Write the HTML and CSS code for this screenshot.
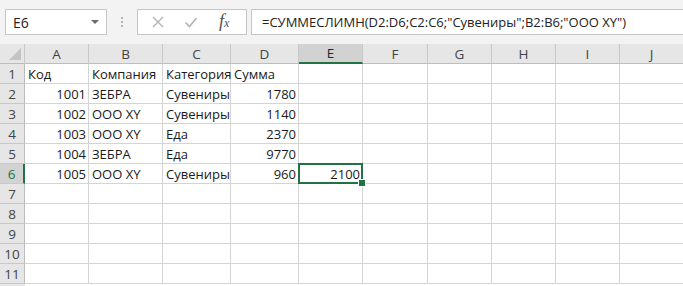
FILE: index.html
```html
<!DOCTYPE html>
<html lang="ru">
<head>
<meta charset="utf-8">
<link rel="stylesheet" href="styles.css">
</head>
<body>
<div class="toolbar">
  <div class="namebox"><span>E6</span>
    <svg class="dd" width="8" height="5" viewBox="0 0 8 5"><path d="M0 0h8L4 4z" fill="#6a6a6a"/></svg>
  </div>
  <div class="dots"><i></i><i></i><i></i></div>
  <div class="fxbox">
    <svg class="ic" width="14" height="14" viewBox="0 0 14 14"><path d="M2 2L12 12M12 2L2 12" stroke="#b3b3b3" stroke-width="1.4" fill="none"/></svg>
    <svg class="ic" width="14" height="14" viewBox="0 0 14 14"><path d="M1.5 7.5L5.5 11.5L12.5 3" stroke="#b3b3b3" stroke-width="1.6" fill="none"/></svg>
    <span class="fx">f<sub>x</sub></span>
  </div>
  <div class="formula">=СУММЕСЛИМН(D2:D6;C2:C6;"Сувениры";B2:B6;"ООО XY")</div>
</div>
<div class="sheet">
  <div class="corner"><svg width="12" height="12" viewBox="0 0 12 12"><path d="M12 0V12H0z" fill="#c3c3c3"/></svg></div>
  <div class="ch">A</div><div class="ch">B</div><div class="ch">C</div><div class="ch">D</div><div class="ch sel">E</div><div class="ch">F</div><div class="ch">G</div><div class="ch">H</div><div class="ch">I</div><div class="ch">J</div>

  <div class="rh">1</div><div class="c">Код</div><div class="c">Компания</div><div class="c">Категория</div><div class="c">Сумма</div><div class="c"></div><div class="c"></div><div class="c"></div><div class="c"></div><div class="c"></div><div class="c"></div>
  <div class="rh">2</div><div class="c n">1001</div><div class="c">ЗЕБРА</div><div class="c">Сувениры</div><div class="c n">1780</div><div class="c"></div><div class="c"></div><div class="c"></div><div class="c"></div><div class="c"></div><div class="c"></div>
  <div class="rh">3</div><div class="c n">1002</div><div class="c">ООО XY</div><div class="c">Сувениры</div><div class="c n">1140</div><div class="c"></div><div class="c"></div><div class="c"></div><div class="c"></div><div class="c"></div><div class="c"></div>
  <div class="rh">4</div><div class="c n">1003</div><div class="c">ООО XY</div><div class="c">Еда</div><div class="c n">2370</div><div class="c"></div><div class="c"></div><div class="c"></div><div class="c"></div><div class="c"></div><div class="c"></div>
  <div class="rh">5</div><div class="c n">1004</div><div class="c">ЗЕБРА</div><div class="c">Еда</div><div class="c n">9770</div><div class="c"></div><div class="c"></div><div class="c"></div><div class="c"></div><div class="c"></div><div class="c"></div>
  <div class="rh sel">6</div><div class="c n">1005</div><div class="c">ООО XY</div><div class="c">Сувениры</div><div class="c n">960</div><div class="c n active">2100</div><div class="c"></div><div class="c"></div><div class="c"></div><div class="c"></div><div class="c"></div>
  <div class="rh">7</div><div class="c"></div><div class="c"></div><div class="c"></div><div class="c"></div><div class="c"></div><div class="c"></div><div class="c"></div><div class="c"></div><div class="c"></div><div class="c"></div>
  <div class="rh">8</div><div class="c"></div><div class="c"></div><div class="c"></div><div class="c"></div><div class="c"></div><div class="c"></div><div class="c"></div><div class="c"></div><div class="c"></div><div class="c"></div>
  <div class="rh">9</div><div class="c"></div><div class="c"></div><div class="c"></div><div class="c"></div><div class="c"></div><div class="c"></div><div class="c"></div><div class="c"></div><div class="c"></div><div class="c"></div>
  <div class="rh">10</div><div class="c"></div><div class="c"></div><div class="c"></div><div class="c"></div><div class="c"></div><div class="c"></div><div class="c"></div><div class="c"></div><div class="c"></div><div class="c"></div>
  <div class="rh">11</div><div class="c"></div><div class="c"></div><div class="c"></div><div class="c"></div><div class="c"></div><div class="c"></div><div class="c"></div><div class="c"></div><div class="c"></div><div class="c"></div>
</div>
</body>
</html>
```
FILE: styles.css
```css
* { box-sizing: border-box; }
html, body { margin: 0; padding: 0; background: #fff; overflow: hidden; }
body {
  width: 683px; height: 286px;
  font-family: "Open Sans", "Liberation Sans", sans-serif;
  font-size: 13px;
  color: #1a1a1a;
}
.toolbar {
  height: 44px;
  background: #f3f3f3;
  display: flex;
  align-items: flex-start;
  padding-top: 9px;
  padding-left: 5px;
}
.namebox {
  width: 102px; height: 26px;
  background: #fff;
  border: 1px solid #c6c6c6;
  display: flex; align-items: center; justify-content: space-between;
  padding: 0 7px 0 7px;
  font-size: 14px; color: #222;
}
.namebox .dd { margin-top: 1px; }
.dots {
  width: 30px; height: 26px;
  display: flex; flex-direction: column; align-items: center; justify-content: center; gap: 2px;
}
.dots i { display: block; width: 2px; height: 2px; background: #b5b5b5; }
.fxbox {
  width: 110px; height: 26px;
  background: #fff;
  border: 1px solid #c6c6c6;
  display: flex; align-items: center;
  padding-left: 13px;
  gap: 19px;
}
.fx {
  font-family: "Liberation Serif", serif;
  font-style: italic; font-size: 18px; color: #505050;
  margin-left: 2px;
  line-height: 20px;
}
.fx sub { font-size: 12px; vertical-align: 0; }
.formula {
  flex: 1;
  margin-left: 4px;
  height: 26px;
  background: #fff;
  border: 1px solid #c6c6c6;
  border-right: 0;
  padding-left: 10px;
  line-height: 24px;
  font-size: 13px;
  color: #222;
  white-space: nowrap;
}
.sheet {
  display: grid;
  grid-template-columns: 25px 64px 74px 68px 68px 64px 65px 64px 64px 64px 64px;
  grid-auto-rows: 20px;
  height: 242px;
  background: #e6e6e6 linear-gradient(#fff, #fff) 25px 0 / 100% 100% no-repeat;
}
.corner, .ch, .rh {
  background: #e6e6e6;
  color: #444;
  border-right: 1px solid #c8c8c8;
  border-bottom: 1px solid #bdbdbd;
  font-size: 13.5px;
  display: flex; align-items: center; justify-content: center;
}
.corner { justify-content: flex-end; align-items: flex-end; padding: 0 3px 3px 0; }
.rh { border-bottom-color: #c8c8c8; border-right-color: #bdbdbd; }
.ch.sel { background: #d2d2d2; border-bottom: 2px solid #217346; color: #262626; }
.rh.sel { background: #d2d2d2; border-right: 2px solid #217346; color: #217346; }
.c {
  border-right: 1px solid #d4d4d4;
  border-bottom: 1px solid #d4d4d4;
  padding: 0 2px 0 3px;
  display: flex; align-items: flex-end;
  line-height: 18px;
  white-space: nowrap;
}
.c.n { justify-content: flex-end; }
.c.active { position: relative; }
.c.active::before {
  content: "";
  position: absolute;
  left: -1px; top: -1px; right: -1px; bottom: -1px;
  border: 2px solid #217346;
}
.c.active::after {
  content: "";
  position: absolute;
  right: -4px; bottom: -4px;
  width: 6px; height: 6px;
  background: #217346;
  border: 1px solid #fff;
}
```
